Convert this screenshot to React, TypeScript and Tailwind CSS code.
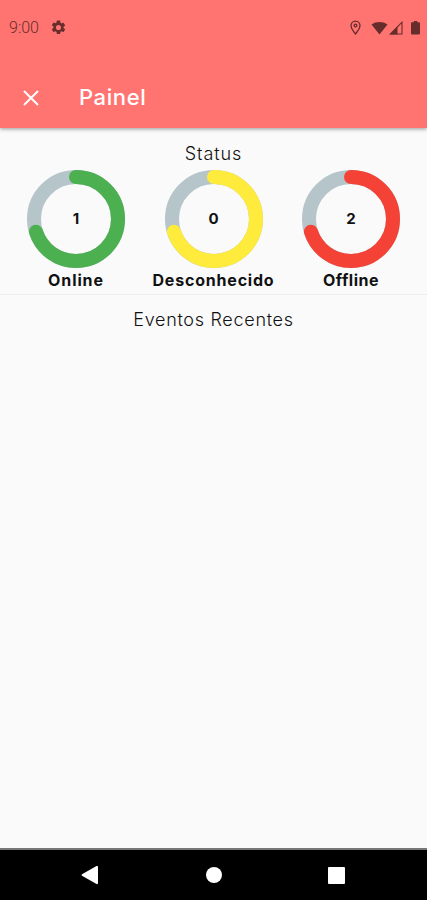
import React from 'react';

const RADIUS = 42;
const LENGTH = 2 * Math.PI * RADIUS;

type RingProps = { value: number; label: string; color: string; labelClass: string };

function StatusRing({ value, label, color, labelClass }: RingProps) {
  return (
    <div className="flex w-[137.5px] flex-col items-center">
      <div className="grid size-[98px] place-items-center">
        <svg className="col-start-1 row-start-1 size-[98px] -rotate-90" viewBox="0 0 98 98" fill="none" strokeWidth="14">
          <circle cx="49" cy="49" r={RADIUS} stroke="#b5c5ca" />
          <circle
            cx="49"
            cy="49"
            r={RADIUS}
            stroke={color}
            strokeLinecap="round"
            strokeDasharray={`${LENGTH * 0.7} ${LENGTH}`}
          />
        </svg>
        <span className="col-start-1 row-start-1 -mt-px text-[15px] leading-none font-bold">{value}</span>
      </div>
      <span className={`mt-px leading-[22px] font-bold whitespace-nowrap ${labelClass}`}>{label}</span>
    </div>
  );
}

export default function App() {
  return (
    <div className="flex h-[900px] w-[427px] flex-col overflow-hidden bg-[#fafafa] font-['Inter',sans-serif] text-[#111111]">
      <header className="z-10 h-[128px] shrink-0 bg-[#ff7370] shadow-[0_1px_4px_rgba(0,0,0,0.4)]">
        <div className="flex h-[55px] items-center pr-[7px] pl-[9px] text-[#672d2c]">
          <span className="w-[31px] font-['Roboto',sans-serif] text-[16px] leading-none font-light whitespace-nowrap">9:00</span>
          <svg className="ml-[10px] size-[17px]" viewBox="0 0 24 24" fill="currentColor">
            <path d="M19.14 12.94c.04-.3.06-.61.06-.94s-.02-.64-.07-.94l2.03-1.58a.49.49 0 0 0 .12-.61l-1.92-3.32a.49.49 0 0 0-.59-.22l-2.39.96c-.5-.38-1.03-.7-1.62-.94l-.36-2.54A.48.48 0 0 0 13.92 2h-3.84a.48.48 0 0 0-.47.41l-.36 2.54c-.59.24-1.13.57-1.62.94l-2.39-.96a.48.48 0 0 0-.59.22L2.74 8.47a.48.48 0 0 0 .12.61l2.03 1.58c-.05.3-.09.63-.09.94s.02.64.07.94l-2.03 1.58a.49.49 0 0 0-.12.61l1.92 3.32c.12.22.37.29.59.22l2.39-.96c.5.38 1.03.7 1.62.94l.36 2.54c.05.24.24.41.48.41h3.84c.24 0 .44-.17.47-.41l.36-2.54c.59-.24 1.13-.56 1.62-.94l2.39.96c.22.08.47 0 .59-.22l1.92-3.32a.48.48 0 0 0-.12-.61zM12 15.6A3.6 3.6 0 1 1 12 8.4a3.6 3.6 0 0 1 0 7.2z" />
          </svg>
          <div className="ml-auto flex items-center">
            <svg className="mr-[10px] h-[15px] w-[11px]" viewBox="0 0 11 15" fill="none" stroke="currentColor" strokeWidth="1.300">
              <path d="M5.5 14C2.5 10.4 1 7.8 1 5.6a4.5 4.5 0 0 1 9 0C10 7.8 8.5 10.4 5.5 14Z" />
              <circle cx="5.5" cy="5.5" r="1.4" />
            </svg>
            <svg className="mr-[1px] h-[14px] w-[17px]" viewBox="0 0 17 14" fill="currentColor">
              <path d="M.5 3.4C5 .1 12 .1 16.500 3.400L8.500 13.500Z" />
            </svg>
            <svg className="mr-[8px] h-[14px] w-[14px]" viewBox="0 0 14 14">
              <path d="M1.500 13H13V1.200Z" fill="none" stroke="currentColor" strokeWidth="1.100" />
              <path d="M.5 13.500 8.500 5.300V13.500Z" fill="currentColor" />
            </svg>
            <svg className="h-[15px] w-[9px]" viewBox="0 0 9 15" fill="currentColor">
              <path d="M2.800 1H6.200V2.300H8a1 1 0 0 1 1 1V13.500a1 1 0 0 1-1 1H1a1 1 0 0 1-1-1V3.300a1 1 0 0 1 1-1H2.800Z" />
            </svg>
          </div>
        </div>
        <div className="flex h-[85px] items-center pl-[23px] text-white">
          <svg className="mt-px size-[16px]" viewBox="0 0 16 16" fill="none" stroke="currentColor" strokeWidth="2">
            <path d="M1 1 15 15M15 1 1 15" />
          </svg>
          <h1 className="-mt-px ml-[40px] text-[22px] leading-none font-medium tracking-[0.6px]">Painel</h1>
        </div>
      </header>

      <section className="h-[167px] shrink-0 border-b border-[#eeeeee] pt-[14px]">
        <h2 className="text-center text-[18px] leading-[24px] font-light tracking-[0.9px]">Status</h2>
        <div className="mt-[4px] flex justify-center">
          <StatusRing value={1} label="Online" color="#4caf50" labelClass="text-[16px] tracking-[0.9px]" />
          <StatusRing value={0} label="Desconhecido" color="#ffeb3b" labelClass="text-[16px] tracking-[0.8px]" />
          <StatusRing value={2} label="Offline" color="#f44336" labelClass="text-[16px] tracking-[0.5px]" />
        </div>
      </section>

      <main className="flex-1 pt-[13px]">
        <h2 className="text-center text-[18px] leading-[24px] font-light tracking-[0.7px]">Eventos Recentes</h2>
      </main>

      <nav className="flex h-[52px] shrink-0 items-center border-t-2 border-[#777777] bg-black pl-[81px] text-white">
        <svg className="h-[20px] w-[17px]" viewBox="0 0 17 20" fill="currentColor">
          <path d="M1 9.200Q0 10 1 10.800L15.500 19Q17 19.500 17 18V2Q17 .5 15.500 1Z" />
        </svg>
        <span className="ml-[108px] size-[16px] rounded-full bg-white" />
        <span className="ml-[106px] size-[17px] rounded-[1px] bg-white" />
      </nav>
    </div>
  );
}
